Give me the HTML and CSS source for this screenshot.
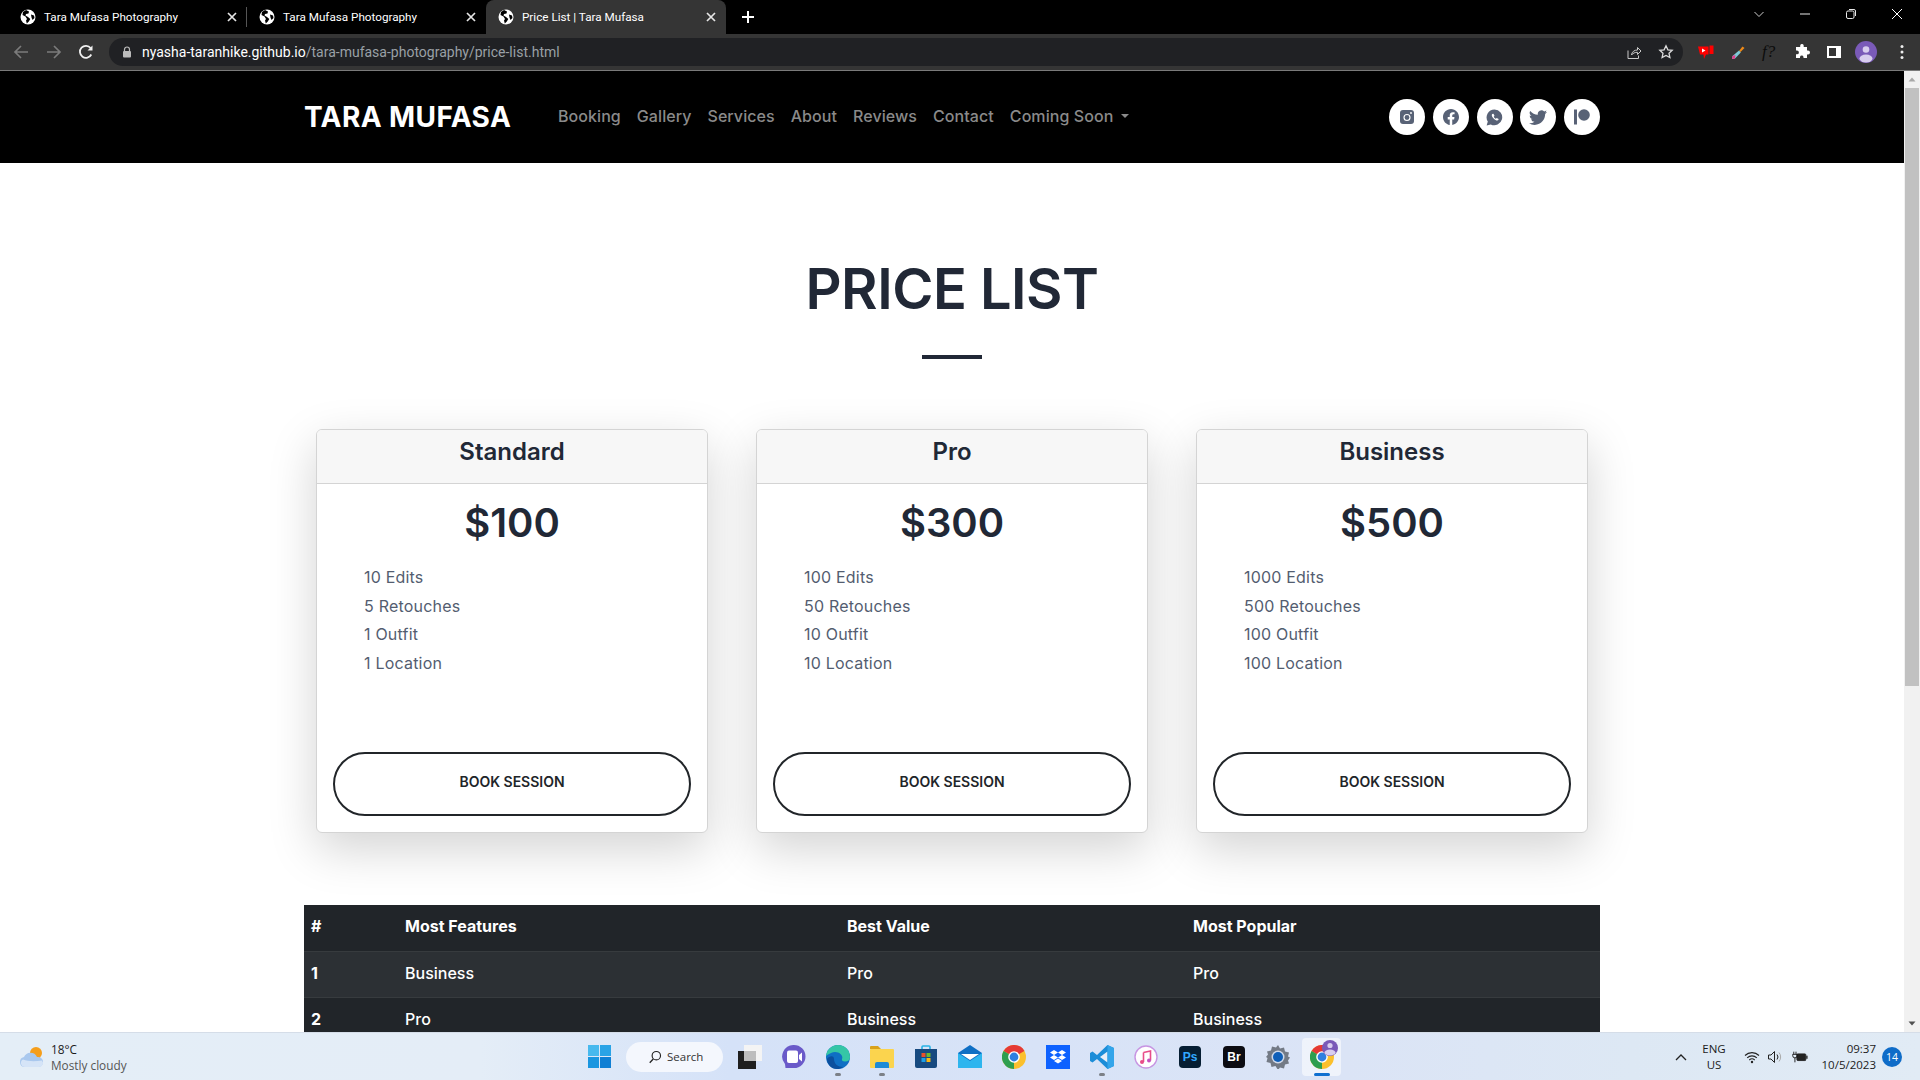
FILE: index.html
```html
<!DOCTYPE html>
<html lang="en">
<head>
<meta charset="utf-8">
<title>Price List | Tara Mufasa</title>
<link rel="stylesheet" href="styles.css">
</head>
<body>
<svg class="defs" width="0" height="0" aria-hidden="true">
  <symbol id="globe" viewBox="0 0 16 16"><circle cx="8" cy="8" r="7.5" fill="#fff"/><path d="M6 1 3 3 2.5 6l3 1.5L7 10l-1 1.5.8 3 2-2 1.5-2.5L8 8 5.5 6.5 6 5l2.5-.5L9 2.500z" fill="#000"/><path d="M11 5.500 14 6.500l.5 2.500-2 2-1-2.500z" fill="#000"/></symbol>
  <symbol id="xmark" viewBox="0 0 12 12"><path d="M2 2l8 8M10 2l-8 8" stroke="#e6e6e6" stroke-width="1.700" fill="none"/></symbol>
  <symbol id="chrome" viewBox="0 0 24 24"><circle cx="12" cy="12" r="12" fill="#fbc02d"/><path d="M12 12 1.600 6A12 12 0 0 1 22.400 6z" fill="#e53935"/><path d="M12 12 1.600 6A12 12 0 0 0 12 24z" fill="#2e9e4f"/><circle cx="12" cy="12" r="5.800" fill="#fff"/><circle cx="12" cy="12" r="4.400" fill="#2f7fe0"/></symbol>
</svg>

<header class="tabstrip">
  <div class="tab">
    <svg class="favicon"><use href="#globe"/></svg><span class="tab-title">Tara Mufasa Photography</span><svg class="tab-x"><use href="#xmark"/></svg>
  </div>
  <div class="tab tab-sep">
    <svg class="favicon"><use href="#globe"/></svg><span class="tab-title">Tara Mufasa Photography</span><svg class="tab-x"><use href="#xmark"/></svg>
  </div>
  <div class="tab tab-active">
    <svg class="favicon"><use href="#globe"/></svg><span class="tab-title">Price List | Tara Mufasa</span><svg class="tab-x"><use href="#xmark"/></svg>
  </div>
  <svg class="new-tab" viewBox="0 0 14 14"><path d="M7 1v12M1 7h12" stroke="#fff" stroke-width="2" fill="none"/></svg>
  <div class="win-controls">
    <svg class="win-ic" viewBox="0 0 12 12"><path d="M1.500 4 6 8.500 10.500 4" stroke="#ccc" fill="none"/></svg>
    <svg class="win-ic" viewBox="0 0 12 12"><path d="M1 6h10" stroke="#e8e8e8" fill="none"/></svg>
    <svg class="win-ic" viewBox="0 0 12 12"><rect x="1.500" y="3" width="7.500" height="7.500" rx="1.500" stroke="#e8e8e8" fill="none"/><path d="M4 1.500h5a1.500 1.500 0 0 1 1.500 1.500v5" stroke="#e8e8e8" fill="none"/></svg>
    <svg class="win-ic" viewBox="0 0 12 12"><path d="M1 1l10 10M11 1 1 11" stroke="#fff" fill="none"/></svg>
  </div>
</header>

<div class="toolbar">
  <svg class="tb-ic tb-back" viewBox="0 0 16 16"><path d="M15 8H2M8 2 2 8l6 6" stroke="#7b7b7b" stroke-width="1.700" fill="none"/></svg>
  <svg class="tb-ic tb-fwd" viewBox="0 0 16 16"><path d="M1 8h13M8 2l6 6-6 6" stroke="#7b7b7b" stroke-width="1.700" fill="none"/></svg>
  <svg class="tb-ic tb-reload" viewBox="0 0 16 16"><path d="M13.300 10.500A6 6 0 1 1 12.600 4" stroke="#f1f1f1" stroke-width="1.800" fill="none"/><path d="M14.500 1.500v5h-5z" fill="#f1f1f1"/></svg>
  <div class="omnibox">
    <svg class="lock" viewBox="0 0 10 12"><path d="M2.500 5V3.500a2.500 2.500 0 0 1 5 0V5" stroke="#bbb" stroke-width="1.200" fill="none"/><rect x="1" y="5" width="8" height="6.500" rx="1" fill="#bbb"/></svg>
    <span class="url"><span class="url-host">nyasha-taranhike.github.io</span>/tara-mufasa-photography/price-list.html</span>
    <svg class="omni-ic omni-share" viewBox="0 0 16 16"><path d="M2 6.500V14.500h10.500v-3" stroke="#c8c8c8" fill="none"/><path d="M5.500 11c.5-3.500 3-5 6-5V3.500L15 7l-3.500 3.500V8.300C9 8.300 7 9 5.500 11z" stroke="#c8c8c8" fill="none"/></svg>
    <svg class="omni-ic omni-star" viewBox="0 0 16 16"><path d="m8 1.800 1.900 4 4.300.5-3.200 3 .9 4.300L8 11.400l-3.900 2.200.9-4.300-3.200-3 4.300-.5z" stroke="#dcdcdc" stroke-width="1.300" fill="none"/></svg>
  </div>
  <div class="extensions">
    <svg class="ext" viewBox="0 0 16 16"><path d="M0 2.500h10.500v8H8L6 15 5.500 10.500H2z" fill="#f00"/><path d="M11.500 1.500H15.500v8.500h-4z" fill="#f00"/><path d="M4 4.500l3.500 2-3.500 2z" fill="#fff"/></svg>
    <svg class="ext" viewBox="0 0 16 16"><path d="M9 7 12.500 2.500 14.500 4 10.500 8z" fill="#ef8a17"/><path d="M9 6.500 10.800 8.500 5 14.500l-3 .5.500-3z" fill="#7ecbd8"/><path d="M5.500 11 5 14.500l-3 .5.500-3z" fill="#e83e8c"/></svg>
    <span class="ext-f">f?</span>
    <svg class="ext" viewBox="0 0 16 16"><path d="M6.200 1.500a1.800 1.800 0 0 1 3.500 0V3h3.300v3.500h1a2 2 0 0 1 0 4h-1V14H9.500v-1a1.800 1.800 0 0 0-3.500 0v1H2v-3.700h1a1.900 1.900 0 0 0 0-3.800H2V3h4.200z" fill="#fff"/></svg>
    <svg class="ext" viewBox="0 0 16 16"><path d="M1 2h14v12H1z" fill="#fff"/><path d="M3 4h7v8H3z" fill="#353535"/></svg>
    <svg class="ext-avatar" viewBox="0 0 22 22"><circle cx="11" cy="11" r="11" fill="#7a5ab8"/><circle cx="11" cy="8.500" r="3.300" fill="#d8cdee"/><ellipse cx="11" cy="17.500" rx="6.500" ry="4" fill="#d8cdee"/></svg>
    <svg class="ext-dots" viewBox="0 0 4 16"><circle cx="2" cy="2.500" r="1.500" fill="#eee"/><circle cx="2" cy="8" r="1.500" fill="#eee"/><circle cx="2" cy="13.500" r="1.500" fill="#eee"/></svg>
  </div>
</div>

<div class="viewport">
  <main class="page">
    <nav class="navbar">
      <div class="container nav-inner">
        <a class="brand">TARA MUFASA</a>
        <ul class="nav-links">
          <li>Booking</li>
          <li>Gallery</li>
          <li>Services</li>
          <li>About</li>
          <li>Reviews</li>
          <li>Contact</li>
          <li class="dropdown">Coming Soon</li>
        </ul>
        <div class="socials">
          <span class="social"><svg class="social-ic" viewBox="0 0 16 16"><rect x="1" y="1" width="14" height="14" rx="3" fill="#586276"/><circle cx="8" cy="8.500" r="3" fill="none" stroke="#fff" stroke-width="1.100"/><circle cx="12" cy="4" r=".9" fill="#fff"/></svg></span>
          <span class="social"><svg class="social-ic" viewBox="0 0 16 16"><path fill="#586276" d="M16 8.049c0-4.446-3.582-8.05-8-8.05C3.580 0-.002 3.603-.002 8.050c0 4.017 2.926 7.347 6.750 7.951v-5.625h-2.030V8.050H6.750V6.275c0-2.017 1.195-3.131 3.022-3.131.876 0 1.791.157 1.791.157v1.980h-1.009c-.993 0-1.303.621-1.303 1.258v1.510h2.218l-.354 2.326H9.250V16c3.824-.604 6.750-3.934 6.750-7.951z"/></svg></span>
          <span class="social"><svg class="social-ic social-wa" viewBox="0 0 16 16"><path fill="#586276" d="M8 .5a7.400 7.400 0 0 0-6.300 11.300L.6 15.600l3.900-1.100A7.400 7.400 0 1 0 8 .5z"/><path d="M5.800 4.600c-1 1 0 3 1.600 4.500 1.500 1.500 3.300 2.300 4.200 1.300l.3-.9-1.800-1-.8.700c-.8-.4-1.600-1.200-2-2l.7-.8-1-1.900z" fill="#fff"/></svg></span>
          <span class="social"><svg class="social-ic social-tw" viewBox="0 0 16 16"><path fill="#586276" d="M5.026 15c6.038 0 9.341-5.003 9.341-9.334 0-.14 0-.282-.006-.422A6.685 6.685 0 0 0 16 3.542a6.658 6.658 0 0 1-1.889.518 3.301 3.301 0 0 0 1.447-1.817 6.533 6.533 0 0 1-2.087.793A3.286 3.286 0 0 0 7.875 6.030a9.325 9.325 0 0 1-6.767-3.429 3.289 3.289 0 0 0 1.018 4.382A3.323 3.323 0 0 1 .640 6.575v.045a3.288 3.288 0 0 0 2.632 3.218 3.203 3.203 0 0 1-.865.115 3.230 3.230 0 0 1-.614-.057 3.283 3.283 0 0 0 3.067 2.277A6.588 6.588 0 0 1 .780 13.580a6.320 6.320 0 0 1-.780-.045A9.344 9.344 0 0 0 5.026 15z"/></svg></span>
          <span class="social"><svg class="social-ic social-pa" viewBox="0 0 16 16"><rect x="0" y="0.500" width="3" height="15" fill="#586276"/><circle cx="10" cy="6" r="5.800" fill="#586276"/></svg></span>
        </div>
      </div>
    </nav>

    <section class="container content">
      <h1 class="page-title">PRICE LIST</h1>
      <div class="title-rule"></div>

      <div class="cards">
        <article class="card">
          <h4 class="card-head">Standard</h4>
          <div class="card-body">
            <div class="price">$100</div>
            <ul class="features">
              <li>10 Edits</li><li>5 Retouches</li><li>1 Outfit</li><li>1 Location</li>
            </ul>
            <a class="book">BOOK SESSION</a>
          </div>
        </article>
        <article class="card">
          <h4 class="card-head">Pro</h4>
          <div class="card-body">
            <div class="price">$300</div>
            <ul class="features">
              <li>100 Edits</li><li>50 Retouches</li><li>10 Outfit</li><li>10 Location</li>
            </ul>
            <a class="book">BOOK SESSION</a>
          </div>
        </article>
        <article class="card">
          <h4 class="card-head">Business</h4>
          <div class="card-body">
            <div class="price">$500</div>
            <ul class="features">
              <li>1000 Edits</li><li>500 Retouches</li><li>100 Outfit</li><li>100 Location</li>
            </ul>
            <a class="book">BOOK SESSION</a>
          </div>
        </article>
      </div>

      <table class="compare">
        <colgroup><col class="c1"><col class="c2"><col class="c3"><col class="c4"></colgroup>
        <thead>
          <tr><th>#</th><th>Most Features</th><th>Best Value</th><th>Most Popular</th></tr>
        </thead>
        <tbody>
          <tr class="odd"><th>1</th><td>Business</td><td>Pro</td><td>Pro</td></tr>
          <tr><th>2</th><td>Pro</td><td>Business</td><td>Business</td></tr>
        </tbody>
      </table>
    </section>
  </main>
  <aside class="scrollbar">
    <svg class="sb-arrow" viewBox="0 0 16 16"><path d="M4.500 10 8 6l3.500 4z" fill="#a8a8a8"/></svg>
    <div class="sb-thumb"></div>
    <svg class="sb-arrow sb-down" viewBox="0 0 16 16"><path d="M4.500 6 8 10l3.500-4z" fill="#505050"/></svg>
  </aside>
</div>

<footer class="taskbar">
  <div class="weather">
    <svg class="weather-ic" viewBox="0 0 26 22"><circle cx="17" cy="7" r="6" fill="#f59e1b"/><path d="M6 21a5 5 0 0 1-1-9.900A7 7 0 0 1 18 11a5 5 0 0 1 2 10z" fill="#a9c8ee"/><path d="M6 21a4 4 0 0 1-2-7.500c5 2 12 2 19 1a4 4 0 0 1-3 6.500z" fill="#d5e4f7"/></svg>
    <div class="weather-text"><span class="w-temp">18°C</span><span class="w-desc">Mostly cloudy</span></div>
  </div>
  <svg class="start" viewBox="0 0 23 23"><rect width="11" height="11" fill="#47b9ee"/><rect x="12" width="11" height="11" fill="#2aa3e6"/><rect y="12" width="11" height="11" fill="#1a96e0"/><rect x="12" y="12" width="11" height="11" fill="#0f7fd4"/></svg>
  <div class="search-pill">
    <svg class="search-ic" viewBox="0 0 16 16"><circle cx="9.500" cy="6.500" r="4.800" stroke="#222" stroke-width="1.300" fill="none"/><path d="M6 10.300 2 14.500" stroke="#222" stroke-width="1.500"/></svg>
    <span>Search</span>
  </div>
  <div class="apps">
    <span class="app"><svg class="app-ic" viewBox="0 0 24 24"><rect x="6" y="0" width="18" height="16" fill="#f4f4f4"/><rect x="0" y="6" width="18" height="18" fill="#1f1f1f"/><rect x="6" y="6" width="12" height="10" fill="#bdbdbd"/></svg></span>
    <span class="app"><svg class="app-ic" viewBox="0 0 24 24"><path d="M12 0a11.500 11.500 0 0 1 0 23H3.500l-.5-4A11.500 11.500 0 0 1 12 0z" fill="#6a5ac9"/><path d="M5 7.500a2 2 0 0 1 2-2h7a2 2 0 0 1 2 2V16a2 2 0 0 1-2 2H7a2 2 0 0 1-2-2z" fill="#fff"/><path d="M17 10l3-2.500v9L17 14z" fill="#fff"/></svg></span>
    <span class="app app-dot"><svg class="app-ic" viewBox="0 0 24 24"><circle cx="12" cy="12" r="12" fill="#0f6fc4"/><path d="M0 11C1 4 6 0 12 0c7 0 12 5 12 12 0 3-2 4.500-5 4.500-2.500 0-3.500-1-3-2.500.5-1 .5-3-1-4.500C12 6.500 8 6.500 5 8c-2 1-4 2-5 3z" fill="#35c6a6"/><path d="M8 14c0 5 4 8 9 8-2 1.500-4 2-6 2-6 0-10-5-10-10 2-3 7-4 7 0z" fill="#0b4f9e"/></svg></span>
    <span class="app app-dot"><svg class="app-ic" viewBox="0 0 24 24"><path d="M0 2a1 1 0 0 1 1-1h7l3 3H0z" fill="#d9a21b"/><rect y="4" width="24" height="19" rx="1" fill="#fbd44e"/><path d="M5 23v-4a2 2 0 0 1 2-2h10a2 2 0 0 1 2 2v4z" fill="#1d8ad6"/></svg></span>
    <span class="app"><svg class="app-ic" viewBox="0 0 24 24"><path d="M8 5V2a1 1 0 0 1 1-1h6a1 1 0 0 1 1 1v3" stroke="#27b3e6" stroke-width="1.600" fill="none"/><path d="M1 4h22v17a2 2 0 0 1-2 2H3a2 2 0 0 1-2-2z" fill="#174a80"/><rect x="7.500" y="8" width="4" height="4" fill="#e8502c"/><rect x="12.500" y="8" width="4" height="4" fill="#70b72c"/><rect x="7.500" y="13" width="4" height="4" fill="#1da0e8"/><rect x="12.500" y="13" width="4" height="4" fill="#fcb813"/></svg></span>
    <span class="app"><svg class="app-ic" viewBox="0 0 24 24"><path d="M0 8 12 0l12 8v15H0z" fill="#0f6fc4"/><path d="M0 8l12 8 12-8v15H0z" fill="#2eb5ee"/><path d="M3 9h18l-9 6z" fill="#fff"/></svg></span>
    <span class="app"><svg class="app-ic"><use href="#chrome"/></svg></span>
    <span class="app"><svg class="app-ic" viewBox="0 0 24 24"><rect width="24" height="24" fill="#0e62ff"/><path d="M8 5l4 2.500L8 10 4 7.500zm8 0 4 2.500-4 2.500-4-2.500zM8 10l4 2.500L8 15l-4-2.500zm8 0 4 2.500-4 2.500-4-2.500zm-8 6 4-2.500 4 2.500-4 2.500z" fill="#fff"/></svg></span>
    <span class="app app-dot"><svg class="app-ic" viewBox="0 0 24 24"><path d="M17.500 0 24 3v18l-6.500 3L7 14l-4.500 3.500L0 16V8l2.500-1.500L7 10z" fill="#1c8dd8"/><path d="M17.500 6.500v11L10 12z" fill="#e8eef8"/><path d="M17.500 0 24 3v18l-6.500 3z" fill="#34a5ea"/></svg></span>
    <span class="app"><svg class="app-ic" viewBox="0 0 24 24"><circle cx="12" cy="12" r="11" fill="#fff" stroke="#c795e2" stroke-width="1.400"/><path d="M9.500 7.500 16.500 6v9.500M9.500 7.500V17" stroke="#e84d8a" stroke-width="1.600" fill="none"/><circle cx="8" cy="17" r="2" fill="#e84d8a"/><circle cx="15" cy="15.500" r="2" fill="#c64fc0"/></svg></span>
    <span class="app"><span class="badge-app app-ps">Ps</span></span>
    <span class="app"><span class="badge-app app-br">Br</span></span>
    <span class="app"><svg class="app-ic" viewBox="0 0 24 24"><path d="M12 0l2 3.500 4-1 1 4 4 1-1 4 2 1-2 3 1 3-4 1-1 4-4-1-2 2.500L9.500 21l-4 1-1-4-4-1 1-4L0 12l2-2.500-1-3 4-1 1-4 4 1z" fill="#737a85"/><circle cx="12" cy="12" r="6.500" fill="#cfd9ea"/><circle cx="12" cy="12" r="5" fill="#0f5fb8"/></svg></span>
    <span class="app app-active"><svg class="app-ic"><use href="#chrome"/></svg><svg class="app-over" viewBox="0 0 16 16"><circle cx="8" cy="8" r="8" fill="#7a5ab8"/><circle cx="8" cy="5.500" r="2.600" fill="#d8cdee"/><ellipse cx="8" cy="12.500" rx="5.500" ry="3" fill="#d8cdee"/></svg></span>
  </div>
  <div class="tray">
    <svg class="tray-up" viewBox="0 0 14 14"><path d="M2 10l5-5 5 5" stroke="#222" stroke-width="1.300" fill="none"/></svg>
    <div class="tray-lang"><span>ENG</span><span>US</span></div>
    <svg class="tray-ic" viewBox="0 0 16 16"><path d="M1 6.500a10 10 0 0 1 14 0M3.200 8.800a7 7 0 0 1 9.600 0M5.300 11a4 4 0 0 1 5.400 0" stroke="#222" stroke-width="1.100" fill="none"/><circle cx="8" cy="13" r="1.200" fill="#222"/></svg>
    <svg class="tray-ic" viewBox="0 0 16 16"><path d="M1.500 6h2.500L7.500 2.500v11L4 10H1.500z" stroke="#222" fill="none"/><path d="M10 5.500a4 4 0 0 1 0 5" stroke="#222" fill="none"/><path d="M12 3.500a7 7 0 0 1 0 9" stroke="#aaa" fill="none"/></svg>
    <svg class="tray-ic tray-batt" viewBox="0 0 18 16"><rect x="5.500" y="4.500" width="10" height="7.500" rx="1" stroke="#222" fill="#222"/><rect x="16" y="6.500" width="1.500" height="3.500" fill="#222"/><path d="M2 2v3M4.500 2v3M.8 5h5v1.500a2.500 2.500 0 0 1-5 0zM3.300 9v5" stroke="#111" fill="none"/></svg>
    <div class="tray-clock"><span>09:37</span><span>10/5/2023</span></div>
    <span class="tray-badge">14</span>
  </div>
</footer>
</body>
</html>
```

FILE: styles.css
```css
* { box-sizing: border-box; }
html, body { margin: 0; padding: 0; height: 100%; overflow: hidden; }
body {
  width: 1920px; height: 1080px;
  display: flex; flex-direction: column;
  font-family: Inter, "Liberation Sans", sans-serif;
  color: #212529; background: #fff;
}
ul { list-style: none; margin: 0; padding: 0; }
svg { display: block; flex: none; }
.defs { position: absolute; }

/* Browser chrome */
.tabstrip { height: 34px; background: #000; display: flex; padding-left: 8px; flex: none; }
.tab {
  width: 239px; height: 34px; display: flex; align-items: center;
  padding: 0 9px 0 12px; color: #fff;
  font: 11.700px Roboto, sans-serif; position: relative;
}
.tab-sep::before { content: ""; position: absolute; left: -1px; top: 7px; height: 20px; width: 1px; background: #555; }
.tab-active { width: 240px; background: #353535; border-radius: 8px 8px 0 0; }
.favicon { width: 16px; height: 16px; margin-right: 8px; }
.tab-title { white-space: nowrap; }
.tab-x { width: 12px; height: 12px; margin-left: auto; }
.new-tab { width: 14px; height: 14px; margin: 10px 0 0 15px; }
.win-controls { margin-left: auto; display: flex; padding-right: 17px; align-items: center; height: 28px; }
.win-ic { width: 12px; height: 12px; margin-left: 34px; }

.toolbar {
  height: 37px; flex: none; background: #353535; border-bottom: 1px solid #7a7a7a;
  display: flex; align-items: center; padding: 0 0 0 13px;
}
.tb-ic { width: 16px; height: 16px; }
.tb-fwd { margin-left: 17px; }
.tb-reload { margin-left: 16px; }
.omnibox {
  margin-left: 15px; width: 1574px; height: 28px; background: #202124;
  border-radius: 14px; display: flex; align-items: center; padding: 0 9px 0 13px;
}
.lock { width: 10px; height: 12px; }
.url { margin-left: 10px; font: 14px Roboto, sans-serif; color: #9aa0a6; white-space: nowrap; }
.url-host { color: #fff; }
.omni-ic { width: 16px; height: 16px; }
.omni-share { margin-left: auto; }
.omni-star { margin-left: 16px; }
.extensions { display: flex; align-items: center; margin-left: 15px; }
.ext { width: 16px; height: 16px; margin-right: 16px; }
.ext-f { width: 16px; margin-right: 16px; font: italic 17px "Liberation Serif", serif; color: #0c0c0c; }
.ext-avatar { width: 22px; height: 22px; margin: 0 23px 0 -3px; }
.ext-dots { width: 4px; height: 16px; }

/* Page */
.viewport { flex: 1; min-height: 0; display: flex; }
.page { flex: 1; min-width: 0; overflow: hidden; }
.container { width: 1296px; margin: 0 auto; }
.navbar { background: #000; height: 92px; }
.nav-inner { display: flex; align-items: center; height: 100%; }
.brand { color: #fff; font-weight: 700; font-size: 28px; letter-spacing: 0.4px; width: 254px; white-space: nowrap; }
.nav-links { display: flex; gap: 16px; padding-bottom: 2px; color: #8a8a8a; font-size: 16px; font-weight: 500; letter-spacing: 0.07px; }
.dropdown { display: flex; align-items: center; }
.dropdown::after {
  content: ""; margin-left: 8px; border-top: 4.800px solid #8a8a8a;
  border-left: 4.800px solid transparent; border-right: 4.800px solid transparent;
}
.socials { margin-left: auto; display: flex; gap: 7.750px; }
.social { width: 36px; height: 36px; border-radius: 50%; background: #fff; display: flex; align-items: center; justify-content: center; }
.social-ic { width: 16px; height: 16px; }
.social-tw { width: 18px; height: 18px; }
.social-wa { width: 17px; height: 17px; }

.content { padding-top: 93px; }
.page-title {
  margin: 0; text-align: center; font-size: 56px; line-height: 67px; font-weight: 600;
  color: #212836; letter-spacing: -0.5px;
}
.title-rule { width: 60px; height: 4px; background: #212836; margin: 32px auto 70px; }

.cards { display: grid; grid-template-columns: repeat(3, 392px); gap: 48px; padding: 0 12px; }
.card {
  height: 404px; background: #fff; border: 1px solid #d4d4d4; border-radius: 6px;
  box-shadow: 0 16px 48px rgba(0,0,0,.175); display: flex; flex-direction: column;
}
.card-head {
  margin: 0; height: 54px; padding-top: 7px; text-align: center; background: #f7f7f7;
  border-bottom: 1px solid #d4d4d4; border-radius: 5px 5px 0 0;
  font-size: 24px; line-height: 29px; font-weight: 600; color: #212836;
}
.card-body { flex: 1; padding: 15px 16px 16px; display: flex; flex-direction: column; }
.price { text-align: center; font-size: 40px; line-height: 48px; font-weight: 600; color: #212836; }
.features { margin-top: 16px; padding-left: 31px; color: #535d70; font-size: 16px; line-height: 28.700px; letter-spacing: 0.2px; }
.book {
  margin-top: auto; height: 64px; padding-bottom: 5px; border: 2px solid #212529; border-radius: 32px;
  display: flex; align-items: center; justify-content: center;
  font-size: 14px; font-weight: 600; color: #212529;
}

.compare { margin-top: 72px; width: 1296px; table-layout: fixed; border-collapse: collapse; background: #212529; color: #fff; font-size: 16px; }
.c1 { width: 94px; } .c2 { width: 442px; } .c3 { width: 346px; } .c4 { width: 414px; }
.compare th, .compare td { height: 46px; padding: 0 7px 3px; text-align: left; border-bottom: 1px solid #373b3e; font-weight: 700; }
.compare td { font-weight: 500; }
.odd { background: #2c3034; }

/* Scrollbar */
.scrollbar { width: 16px; background: #f1f1f1; display: flex; flex-direction: column; }
.sb-arrow { width: 16px; height: 17px; }
.sb-thumb { height: 598px; margin-left: 1px; width: 14px; background: #c1c1c1; }
.sb-down { margin-top: auto; }

/* Taskbar */
.taskbar {
  height: 48px; flex: none; display: flex; align-items: center;
  border-top: 1px solid #d5dde8;
  background: linear-gradient(90deg, #e4eef7 0%, #e4edf7 25%, #d5e2f8 38%, #dbe4f6 70%, #dde8f4 85%, #e1ebf5 100%);
  font-family: "Open Sans", sans-serif; color: #1b1b1b;
}
.weather { width: 588px; padding-left: 19px; display: flex; align-items: center; }
.weather-ic { width: 26px; height: 22px; }
.weather-text { margin-left: 6px; display: flex; flex-direction: column; font-size: 11.800px; line-height: 16px; }
.w-desc { color: #555; }
.start { width: 23px; height: 23px; }
.search-pill {
  margin-left: 15px; width: 97px; height: 30px; background: #f4f7fd; border-radius: 15px;
  display: flex; align-items: center; padding-left: 22px; font-size: 11.500px; color: #333;
}
.search-ic { width: 14px; height: 14px; margin-right: 5px; }
.apps { display: flex; margin-left: 5px; }
.app { width: 44px; height: 38px; display: flex; align-items: center; justify-content: center; position: relative; }
.app-ic { width: 24px; height: 24px; }
.app-dot::after { content: ""; position: absolute; left: 19px; bottom: 0; width: 6px; height: 3px; border-radius: 2px; background: #7c8087; }
.app-active { width: 39px; margin-left: 2px; background: rgba(255,255,255,.55); border-radius: 4px; }
.app-active::after { content: ""; position: absolute; left: 12px; bottom: 0; width: 16px; height: 3px; border-radius: 2px; background: #0f6fd0; }
.app-over { position: absolute; right: 3px; top: 2px; width: 16px; height: 16px; }
.badge-app {
  width: 22px; height: 22px; border-radius: 4px; background: #061e33; color: #31a8ff;
  font-family: "Liberation Sans", sans-serif; font-size: 12px; font-weight: 700;
  display: flex; align-items: center; justify-content: center;
}
.app-br { background: #0c0c12; color: #fff; }
.tray { margin-left: auto; display: flex; align-items: center; padding-right: 18px; font-size: 11.500px; }
.tray-up { width: 14px; height: 14px; }
.tray-lang { margin-left: 5px; width: 42px; display: flex; flex-direction: column; align-items: center; line-height: 16px; }
.tray-ic { width: 16px; height: 16px; margin-left: 7px; }
.tray-lang + .tray-ic { margin-left: 9px; }
.tray-batt { margin-left: 9px; }
.tray-clock { margin-left: 4px; width: 64px; display: flex; flex-direction: column; align-items: flex-end; line-height: 16px; white-space: nowrap; }
.tray-badge { margin-left: 6px; width: 20px; height: 20px; border-radius: 50%; background: #0f6cc8; color: #fff; font-size: 10.500px; display: flex; align-items: center; justify-content: center; }
```
